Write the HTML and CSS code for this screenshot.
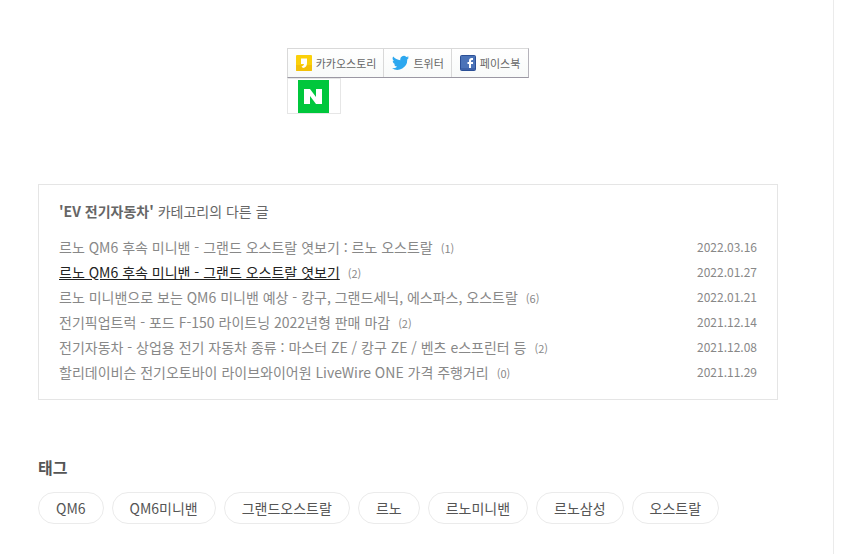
FILE: index.html
```html
<!DOCTYPE html>
<html lang="ko">
<head>
  <meta charset="utf-8">
  <title>EV 전기자동차</title>
  <link rel="stylesheet" href="styles.css">
</head>
<body>
  <main class="content">
    <div class="share">
      <div class="share-row">
        <a href="#" class="share-link">
          <svg width="16" height="16" viewBox="0 0 16 16">
            <rect width="16" height="16" rx="1" fill="#fbd00a"/>
            <path d="M0 10h16v5a1 1 0 0 1-1 1H1a1 1 0 0 1-1-1z" fill="#f3c008"/>
            <path d="M5 3.500h6V8c0 3-1.500 4.500-4 5l-1.500-1.500C7 11 8 10.200 8 9H5z" fill="#fff"/>
          </svg>
          카카오스토리
        </a>
        <a href="#" class="share-link">
          <svg width="17" height="16" viewBox="0 0 24 20">
            <path d="M24 2.400a10 10 0 0 1-2.800.8A5 5 0 0 0 23.300.400a10 10 0 0 1-3.100 1.200A4.900 4.900 0 0 0 11.800 6 14 14 0 0 1 1.700.900a4.900 4.900 0 0 0 1.500 6.600A5 5 0 0 1 1 6.900c0 2.400 1.700 4.400 3.900 4.900a5 5 0 0 1-2.200.1 4.900 4.900 0 0 0 4.600 3.400A9.900 9.900 0 0 1 0 17.400 14 14 0 0 0 21.500 5c1-.7 1.800-1.600 2.500-2.600z" fill="#2ca7ef"/>
          </svg>
          트위터
        </a>
        <a href="#" class="share-link">
          <svg width="16" height="16" viewBox="0 0 16 16">
            <rect x=".5" y=".5" width="15" height="15" rx="1" fill="#4b73b8" stroke="#2b4f96"/>
            <path d="M1 13h14v2H1z" fill="#3d62a8"/>
            <path d="M9 13V9H7.500V7H9V5.500C9 4 10 3 11.500 3H13v2h-1q-1 0-1 1v1h2v2h-2v4z" fill="#fff"/>
          </svg>
          페이스북
        </a>
      </div>
      <a href="#" class="share-naver" aria-label="네이버">
        <svg width="31" height="33" viewBox="0 0 31 33">
          <rect width="31" height="33" fill="#00c73c"/>
          <path d="M6 9h6l6 8V9h6v15h-6l-6-8v8H6z" fill="#fff"/>
        </svg>
      </a>
    </div>

    <section class="category">
      <h4>'<a href="#">EV 전기자동차</a>' <span>카테고리의 다른 글</span></h4>
      <table>
        <tr>
          <th><a href="#">르노 QM6 후속 미니밴 - 그랜드 오스트랄 엿보기 : 르노 오스트랄</a><span class="count">(1)</span></th>
          <td>2022.03.16</td>
        </tr>
        <tr>
          <th><a href="#" class="current">르노 QM6 후속 미니밴 - 그랜드 오스트랄 엿보기</a><span class="count">(2)</span></th>
          <td>2022.01.27</td>
        </tr>
        <tr>
          <th><a href="#">르노 미니밴으로 보는 QM6 미니밴 예상 - 캉구, 그랜드세닉, 에스파스, 오스트랄</a><span class="count">(6)</span></th>
          <td>2022.01.21</td>
        </tr>
        <tr>
          <th><a href="#">전기픽업트럭 - 포드 F-150 라이트닝 2022년형 판매 마감</a><span class="count">(2)</span></th>
          <td>2021.12.14</td>
        </tr>
        <tr>
          <th><a href="#">전기자동차 - 상업용 전기 자동차 종류 : 마스터 ZE / 캉구 ZE / 벤츠 e스프린터 등</a><span class="count">(2)</span></th>
          <td>2021.12.08</td>
        </tr>
        <tr>
          <th><a href="#">할리데이비슨 전기오토바이 라이브와이어원 LiveWire ONE 가격 주행거리</a><span class="count">(0)</span></th>
          <td>2021.11.29</td>
        </tr>
      </table>
    </section>

    <section class="tags">
      <h2>태그</h2>
      <div class="tag-list">
        <a href="#">QM6</a>
        <a href="#">QM6미니밴</a>
        <a href="#">그랜드오스트랄</a>
        <a href="#">르노</a>
        <a href="#">르노미니밴</a>
        <a href="#">르노삼성</a>
        <a href="#">오스트랄</a>
      </div>
    </section>
  </main>
</body>
</html>
```
FILE: styles.css
```css
* {
  box-sizing: border-box;
}

body {
  margin: 0 8px 0 0;
  background: #fff;
  color: #666;
  font-family: "Noto Sans CJK KR", sans-serif;
  font-size: 14px;
}

a {
  color: inherit;
  text-decoration: none;
}

svg {
  display: block;
  flex: none;
}

.content {
  min-height: 100vh;
  padding: 48px 55px 30px 38px;
  border-right: 1px solid #ebebeb;
}

/* share buttons */
.share {
  width: fit-content;
  margin: 0 auto 70px;
}

.share-row {
  display: flex;
  border: 1px solid #d9d9d9;
  border-right-color: #b5b3bb;
  border-bottom-color: #9b98a3;
  background: linear-gradient(#fff, #f8faf9);
}

.share-link {
  display: flex;
  align-items: center;
  gap: 4px;
  height: 28px;
  padding: 0 7px 0 8px;
  color: #666;
  font-size: 11px;
}

.share-link + .share-link {
  border-left: 1px solid #d9d9d9;
}

.share-link:last-child {
  padding-right: 8px;
}

.share-naver {
  display: block;
  width: 54px;
  height: 36px;
  padding: 1px 10px;
  border: 1px solid #e6e6e6;
}

/* other posts of the category */
.category {
  padding: 14px 20px 15px;
  border: 1px solid #e5e5e5;
}

.category h4 {
  margin: 0 0 10px;
  font-size: 14px;
  font-weight: bold;
  line-height: 25px;
}

.category h4 span {
  font-weight: normal;
}

.category table {
  width: 100%;
  border-collapse: collapse;
}

.category th,
.category td {
  height: 25px;
  padding: 0;
  color: #888;
  font-weight: normal;
  line-height: 24px;
  text-align: left;
  vertical-align: middle;
}

.category td {
  width: 80px;
  font-size: 12px;
  text-align: right;
}

.category .current {
  color: #222;
  text-decoration: underline;
}

.count {
  margin-left: 8px;
  font-size: 11px;
  line-height: 1;
}

/* tags */
.tags {
  margin-top: 55px;
}

.tags h2 {
  margin: 0 0 13px;
  color: #555;
  font-size: 16px;
  line-height: 24px;
}

.tag-list {
  display: flex;
  flex-wrap: wrap;
  gap: 8px;
}

.tag-list a {
  padding: 0 17px;
  border: 1px solid #ebebeb;
  border-radius: 16px;
  color: #555;
  line-height: 30px;
}
```
